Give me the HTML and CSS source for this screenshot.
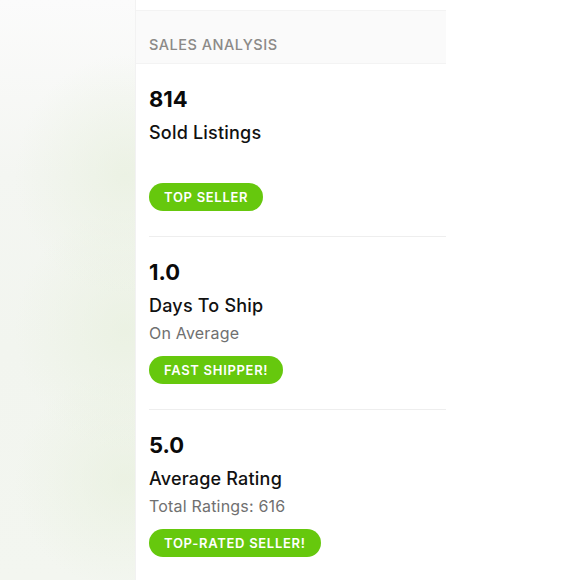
FILE: index.html
```html
<!DOCTYPE html>
<html>
<head>
<meta charset="utf-8">
<link rel="stylesheet" href="styles.css">
</head>
<body>
<div class="page">
  <aside class="side"></aside>
  <main class="panel">
    <div class="column">
      <div class="header">SALES ANALYSIS</div>
      <section class="stat">
        <div class="value">814</div>
        <div class="label">Sold Listings</div>
        <div class="sub">&nbsp;</div>
        <span class="badge">TOP SELLER</span>
      </section>
      <section class="stat">
        <div class="value">1.0</div>
        <div class="label">Days To Ship</div>
        <div class="sub">On Average</div>
        <span class="badge">FAST SHIPPER!</span>
      </section>
      <section class="stat last">
        <div class="value">5.0</div>
        <div class="label">Average Rating</div>
        <div class="sub">Total Ratings: 616</div>
        <span class="badge">TOP-RATED SELLER!</span>
      </section>
    </div>
  </main>
</div>
</body>
</html>
```

FILE: styles.css
```css
html, body {
  margin: 0;
  padding: 0;
  height: 100%;
  background: #ffffff;
}
body {
  font-family: Inter, "Liberation Sans", sans-serif;
  color: #111111;
}
.page {
  display: flex;
  height: 580px;
  overflow: hidden;
}
.side {
  width: 135px;
  flex: none;
  background:
    radial-gradient(ellipse 110px 120px at 125px 175px, rgba(232, 240, 222, 0.7), rgba(232, 240, 222, 0) 100%),
    radial-gradient(ellipse 110px 120px at 125px 330px, rgba(232, 240, 222, 0.7), rgba(232, 240, 222, 0) 100%),
    radial-gradient(ellipse 110px 110px at 125px 480px, rgba(232, 240, 222, 0.7), rgba(232, 240, 222, 0) 100%),
    linear-gradient(180deg, #fbfbfb 0%, #f4f6f2 30%, #f2f5ef 60%, #f3f6f0 100%);
}
.panel {
  flex: 1;
  background: #ffffff;
  border-left: 1px solid #f2f2f2;
}
.column {
  width: 310px;
  padding-top: 10px;
}
.header {
  height: 54px;
  box-sizing: border-box;
  background: #fafafa;
  border-top: 1px solid #f3f3f3;
  border-bottom: 1px solid #f3f3f3;
  padding-left: 13px;
  display: flex;
  align-items: center;
  padding-top: 14px;
  font-size: 14.5px;
  font-weight: 500;
  letter-spacing: 0.5px;
  color: #8c8a88;
}
.stat {
  margin-left: 13px;
  padding-top: 21px;
  padding-bottom: 25px;
  border-bottom: 1px solid #eeeeee;
  display: flex;
  flex-direction: column;
  align-items: flex-start;
}
.stat.last {
  border-bottom: none;
}
.value {
  font-size: 22px;
  font-weight: 700;
  line-height: 28px;
  color: #0a0a0a;
}
.label {
  margin-top: 8px;
  font-size: 18px;
  line-height: 24px;
  font-weight: 500;
  letter-spacing: 0.2px;
  color: #111111;
}
.sub {
  margin-top: 4px;
  font-size: 16px;
  line-height: 22px;
  letter-spacing: 0.2px;
  color: #707070;
}
.badge {
  margin-top: 12px;
  height: 28px;
  box-sizing: border-box;
  padding: 0 15px;
  border-radius: 14px;
  background: #66c80d;
  color: #ffffff;
  font-size: 13px;
  font-weight: 600;
  letter-spacing: 0.7px;
  display: flex;
  align-items: center;
}
```
